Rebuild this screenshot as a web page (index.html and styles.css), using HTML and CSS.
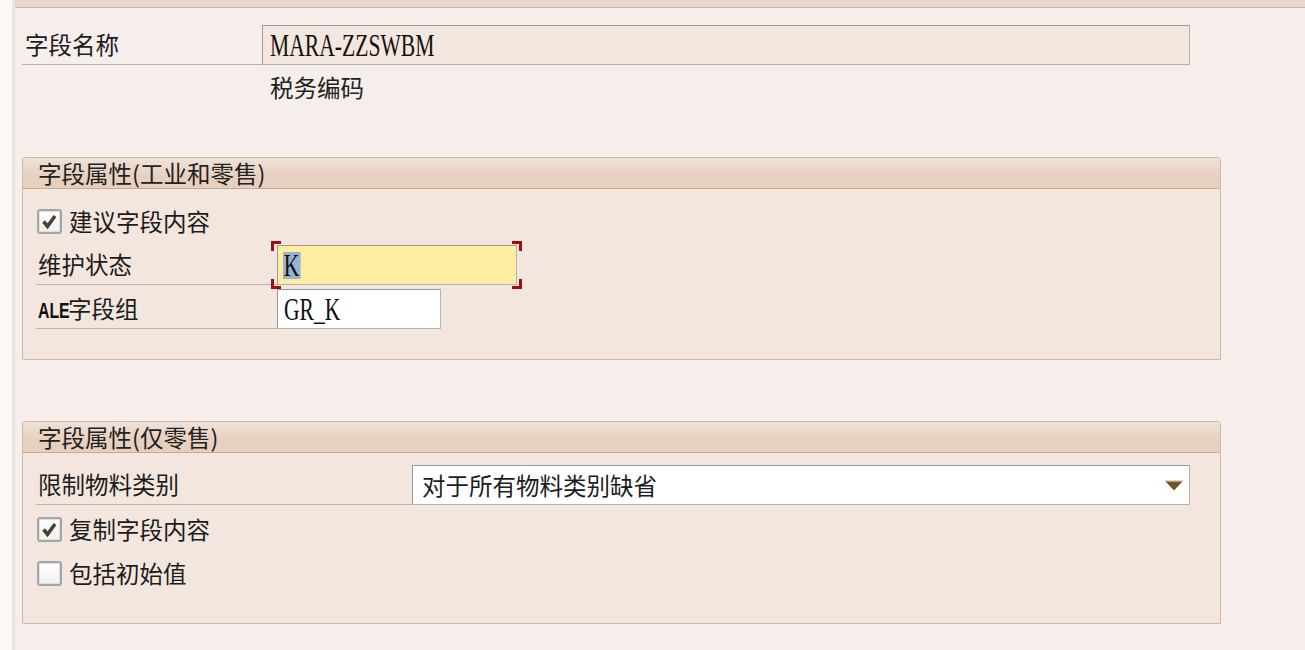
FILE: index.html
```html
<!DOCTYPE html>
<html lang="zh">
<head>
<meta charset="utf-8">
<title>字段属性</title>
<link rel="stylesheet" href="styles.css">
</head>
<body>
<div class="page">
  <div class="rail"></div>
  <div class="main">
    <div class="topbar"></div>
    <div class="content">
      <div class="row">
        <div class="label label-top">字段名称</div>
        <div class="field field-display field-long"><span class="mono">MARA-ZZSWBM</span></div>
      </div>
      <div class="desc">税务编码</div>

      <section class="group group-first">
        <div class="group-head">字段属性(工业和零售)</div>
        <div class="group-body">
          <div class="check-row">
            <span class="cb"><svg viewBox="0 0 24 24" width="24" height="24"><path d="M4.5 12 L9.5 18 L19 5" fill="none" stroke="#45452f" stroke-width="4.5" stroke-linejoin="miter"/></svg></span>
            <span class="check-text">建议字段内容</span>
          </div>
          <div class="row">
            <div class="label label-sec">维护状态</div>
            <div class="focus">
              <div class="field field-yellow"><span class="mono sel">K</span></div>
            </div>
          </div>
          <div class="row">
            <div class="label label-sec"><span class="latin">ALE</span>字段组</div>
            <div class="field field-white field-short"><span class="mono">GR_K</span></div>
          </div>
        </div>
      </section>

      <section class="group group-second">
        <div class="group-head">字段属性(仅零售)</div>
        <div class="group-body">
          <div class="row">
            <div class="label label-wide">限制物料类别</div>
            <div class="field field-white field-select">
              <span class="select-text">对于所有物料类别缺省</span>
              <svg class="arrow" viewBox="0 0 18 11" width="18" height="11"><rect x="0" y="0" width="18" height="1.5" fill="#d9d2c6"/><polygon points="0.5,1.5 17.5,1.5 9,10.5" fill="#6f5626"/></svg>
            </div>
          </div>
          <div class="check-row">
            <span class="cb"><svg viewBox="0 0 24 24" width="24" height="24"><path d="M4.5 12 L9.5 18 L19 5" fill="none" stroke="#45452f" stroke-width="4.5" stroke-linejoin="miter"/></svg></span>
            <span class="check-text">复制字段内容</span>
          </div>
          <div class="check-row">
            <span class="cb"></span>
            <span class="check-text">包括初始值</span>
          </div>
        </div>
      </section>
    </div>
  </div>
</div>
</body>
</html>
```
FILE: styles.css
```css
* { box-sizing: border-box; }
html, body { margin: 0; padding: 0; }
body {
  background: #fbf9f8;
  font-family: "Noto Sans CJK SC", "Noto Sans", sans-serif;
  color: #1c1c1c;
  font-size: 23.5px;
  overflow: hidden;
}
.page {
  display: flex;
  width: 1305px;
  height: 650px;
}
.rail {
  width: 15px;
  flex: none;
  background: #fbf9f8;
  border-right: 3px solid #ebe3dd;
}
.main {
  flex: 1;
  background: #f5eeeb;
  display: flex;
  flex-direction: column;
}
.topbar {
  height: 8px;
  background: #e8d8cc;
  border-bottom: 1px solid #c9b7ab;
}
.content {
  padding: 17px 0 0 7px;
  display: flex;
  flex-direction: column;
}
.row {
  display: flex;
  height: 40px;
}
.label {
  height: 40px;
  line-height: 38px;
  border-bottom: 1px solid #b9b6b4;
  white-space: nowrap;
}
.label-top { width: 240px; padding-left: 3px; }
.label-sec { width: 241px; padding-left: 2px; }
.label-wide { width: 376px; padding-left: 2px; }
.latin {
  display: inline-block;
  font-family: "Liberation Sans", "Noto Sans", sans-serif;
  font-weight: 700;
  font-size: 22px;
  color: #111;
  transform: scaleX(0.72);
  transform-origin: left center;
  margin-right: -14px;
}
.field {
  height: 40px;
  border: 1px solid #b3b3b3;
  border-top-color: #999;
  border-left-color: #999;
  display: flex;
  align-items: center;
}
.field-display {
  background: #f4e7df;
  padding-left: 7px;
}
.field-long { width: 928px; }
.field-yellow {
  width: 240px;
  background: #ffeea1;
  padding-left: 5px;
}
.field-white {
  background: #ffffff;
  padding-left: 6px;
}
.field-short { width: 164px; }
.field-select {
  width: 778px;
  padding-left: 9px;
  padding-right: 6px;
  justify-content: space-between;
}
.mono {
  display: inline-block;
  font-family: "Liberation Serif", "DejaVu Serif", serif;
  font-size: 32px;
  line-height: 27px;
  height: 27px;
  color: #111;
  transform: scaleX(0.675);
  transform-origin: left center;
  white-space: nowrap;
}
.sel {
  background: #99b2cf;
  padding: 0 2px 0 1px;
}
.focus {
  position: relative;
}
.focus::before {
  content: "";
  position: absolute;
  left: -6px;
  right: -5px;
  top: -4px;
  bottom: -4px;
  pointer-events: none;
  background:
    linear-gradient(#a50b0b, #a50b0b) left top / 10px 3px no-repeat,
    linear-gradient(#a50b0b, #a50b0b) left top / 3px 10px no-repeat,
    linear-gradient(#a50b0b, #a50b0b) right top / 10px 3px no-repeat,
    linear-gradient(#a50b0b, #a50b0b) right top / 3px 10px no-repeat,
    linear-gradient(#a50b0b, #a50b0b) left bottom / 10px 3px no-repeat,
    linear-gradient(#a50b0b, #a50b0b) left bottom / 3px 10px no-repeat,
    linear-gradient(#a50b0b, #a50b0b) right bottom / 10px 3px no-repeat,
    linear-gradient(#a50b0b, #a50b0b) right bottom / 3px 10px no-repeat;
}
.select-text {
  line-height: 38px;
  color: #1c1c1c;
}
.arrow { flex: none; margin-top: 1px; }
.desc {
  height: 50px;
  padding-left: 248px;
  line-height: 44px;
  color: #222;
}
.group {
  width: 1199px;
  border: 1px solid #d2b7a2;
  border-radius: 3px 3px 0 0;
  background: #f3e6de;
}
.group-first { margin-top: 42px; }
.group-second { margin-top: 61px; }
.group-head {
  height: 31px;
  line-height: 30px;
  padding-left: 15px;
  background: linear-gradient(#efe2d8, #e8d0c0 60%, #e7cebd);
  border-bottom: 1px solid #c9aa93;
  color: #222;
}
.group-body {
  padding: 12px 0 30px 13px;
  display: flex;
  flex-direction: column;
  gap: 4px;
}
.check-row {
  height: 40px;
  display: flex;
  align-items: center;
  padding-left: 1px;
}
.cb {
  width: 25px;
  height: 25px;
  border: 2px solid #a5a5a5;
  border-radius: 3px;
  background: linear-gradient(#ffffff, #f0f0f0);
  display: flex;
  align-items: center;
  justify-content: center;
  box-shadow: inset 0 0 0 1px #e0e0e0;
  margin-right: 7px;
}
.cb svg { display: block; width: 19px; height: 19px; }
.check-text { line-height: 38px; }
```
